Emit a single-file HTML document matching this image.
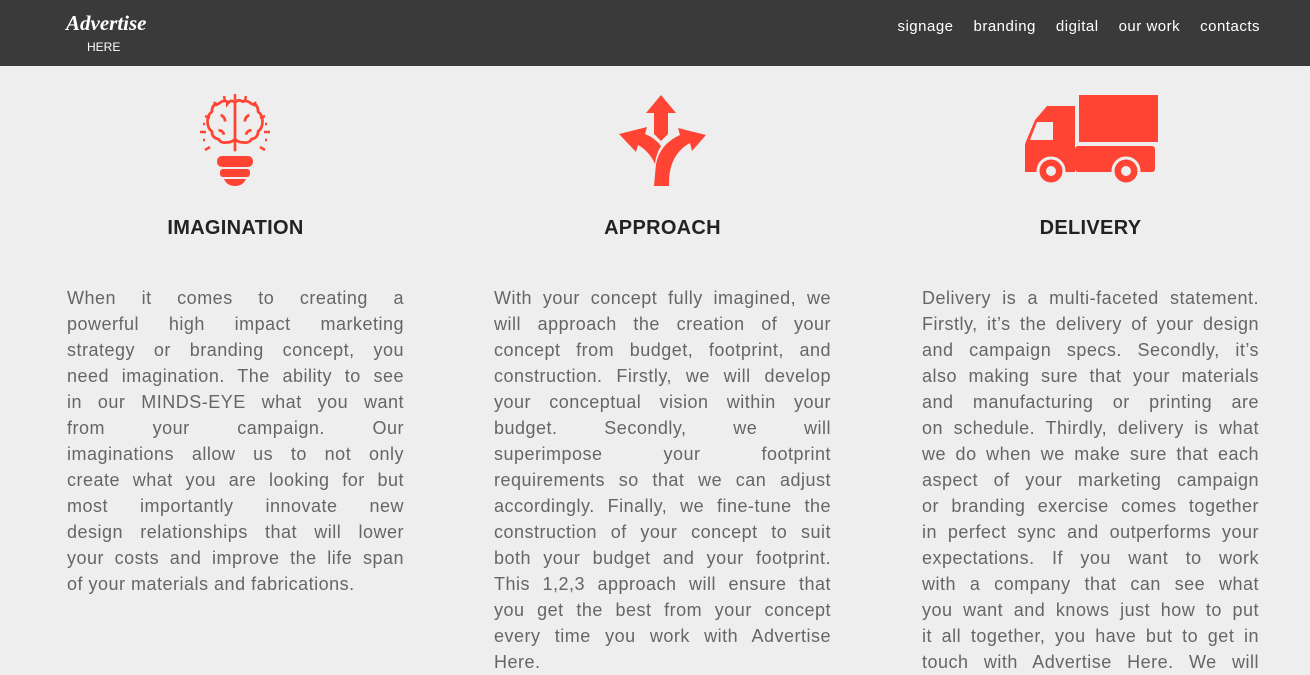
<!DOCTYPE html>
<html><head><style>
body{margin:0;background:#eeeeee;width:1310px;height:660px;overflow:hidden;font-family:"Liberation Sans",sans-serif}
.hd{height:66px;background:#3a3a3a;position:relative}
.logo{position:absolute;left:66px;top:12px;color:#fff}
.logo .a{font-family:"Liberation Serif",serif;font-style:italic;font-weight:bold;font-size:21px;line-height:22px}
.logo .h{font-size:12px;position:absolute;left:21px;top:28px}
.nav{position:absolute;right:50px;top:18px;font-size:15px;color:#fff;letter-spacing:0.5px}
.nav span{margin-left:20px}
.col{position:absolute;top:66px;width:337px}
h2{margin:0;text-align:center;font-size:20px;font-weight:bold;color:#222;position:absolute;top:151px;width:100%;letter-spacing:0.3px}
.p{position:absolute;top:219px;margin:0;font-size:18px;line-height:26px;color:#666;width:337px;letter-spacing:0.5px}
.p div{text-align:justify;text-align-last:justify;white-space:nowrap}
.p div.l{text-align-last:left}
</style></head><body>
<div class="hd">
<div class="logo"><div class="a">Advertise</div><div class="h">HERE</div></div>
<div class="nav"><span>signage</span><span>branding</span><span>digital</span><span>our work</span><span>contacts</span></div>
</div>
<div class="col" style="left:67px">
<svg style="position:absolute;left:133px;top:28px" width="70" height="92" viewBox="0 0 70 92">
<g fill="none" stroke="#ff4433" stroke-width="2.5">
<g transform="translate(35 33) scale(1.1) translate(-35 -33)">
<path d="M28 10 q-4 -2 -8 2 q-6 0 -6 7 q-4 3 -4 9 q0 6 4 9 q0 6 6 7 q2 4 8 3 q4 0 7 -3 q3 3 7 3 q6 1 8 -3 q6 -1 6 -7 q4 -3 4 -9 q0 -6 -4 -9 q0 -7 -6 -7 q-4 -4 -8 -2 q-4 -3 -7 1 q-3 -4 -7 1z M35 11 v44 M22 22 q4 2 4 6 M48 22 q-4 2 -4 6 M20 36 q4 0 5 4 M50 36 q-4 0 -5 4"/>
</g>
<path d="M0 38h6 M64 38h6 M35 0v6 M5 22l5 2 M65 22l-5 2 M5 56l5 -3 M65 56l-5 -3 M14 8l3 4 M56 8l-3 4 M24 2l1 5 M46 2l-1 5 M3 30h2 M65 30h2 M3 46h2 M65 46h2"/>
</g>
<g fill="#ff4433"><rect x="17" y="62" width="36" height="11" rx="5"/><rect x="20" y="75" width="30" height="8" rx="3"/><path d="M24 85h22 q-3 7 -11 7 q-8 0 -11 -7z"/></g>
</svg>
<h2>IMAGINATION</h2>
<div class="p">
<div>When it comes to creating a</div>
<div>powerful high impact marketing</div>
<div>strategy or branding concept, you</div>
<div>need imagination. The ability to see</div>
<div>in our MINDS-EYE what you want</div>
<div>from your campaign. Our</div>
<div>imaginations allow us to not only</div>
<div>create what you are looking for but</div>
<div>most importantly innovate new</div>
<div>design relationships that will lower</div>
<div>your costs and improve the life span</div>
<div class="l">of your materials and fabrications.</div>
</div>
</div>
<div class="col" style="left:494px">
<svg style="position:absolute;left:124px;top:28px" width="90" height="92" viewBox="0 0 90 92">
<g fill="#ff4433">
<path d="M43 1 L58 19 H50 V40 L43 47 L36 40 V19 H28z"/>
<path d="M1 40 L29 33 L27 40 Q37 44 43 52 Q38 60 37 70 Q31 57 20 51 L18 58z"/>
<path d="M88 41 L60 34 L62 41 Q42 50 38 70 L36 92 H51 Q50 61 72 49 L74 57z"/>
</g></svg>
<h2>APPROACH</h2>
<div class="p">
<div>With your concept fully imagined, we</div>
<div>will approach the creation of your</div>
<div>concept from budget, footprint, and</div>
<div>construction. Firstly, we will develop</div>
<div>your conceptual vision within your</div>
<div>budget. Secondly, we will</div>
<div>superimpose your footprint</div>
<div>requirements so that we can adjust</div>
<div>accordingly. Finally, we fine-tune the</div>
<div>construction of your concept to suit</div>
<div>both your budget and your footprint.</div>
<div>This 1,2,3 approach will ensure that</div>
<div>you get the best from your concept</div>
<div>every time you work with Advertise</div>
<div class="l">Here.</div>
</div>
</div>
<div class="col" style="left:922px">
<svg style="position:absolute;left:101px;top:28px" width="136" height="92" viewBox="0 0 136 92">
<g fill="#ff4433">
<rect x="56" y="1" width="79" height="47"/>
<path d="M24 12 H52 V78 H2 V50 L12 26z"/>
<rect x="52" y="52" width="80" height="26" rx="3"/>
</g>
<path d="M14 28 H30 V46 H7z" fill="#eee"/>
<g fill="#ff4433" stroke="#eee" stroke-width="3"><circle cx="28" cy="77" r="13"/><circle cx="103" cy="77" r="13"/></g>
<g fill="#eee"><circle cx="28" cy="77" r="5"/><circle cx="103" cy="77" r="5"/></g>
</svg>
<h2>DELIVERY</h2>
<div class="p">
<div>Delivery is a multi-faceted statement.</div>
<div>Firstly, it’s the delivery of your design</div>
<div>and campaign specs. Secondly, it’s</div>
<div>also making sure that your materials</div>
<div>and manufacturing or printing are</div>
<div>on schedule. Thirdly, delivery is what</div>
<div>we do when we make sure that each</div>
<div>aspect of your marketing campaign</div>
<div>or branding exercise comes together</div>
<div>in perfect sync and outperforms your</div>
<div>expectations. If you want to work</div>
<div>with a company that can see what</div>
<div>you want and knows just how to put</div>
<div>it all together, you have but to get in</div>
<div>touch with Advertise Here. We will</div>
</div>
</div>
</body></html>
